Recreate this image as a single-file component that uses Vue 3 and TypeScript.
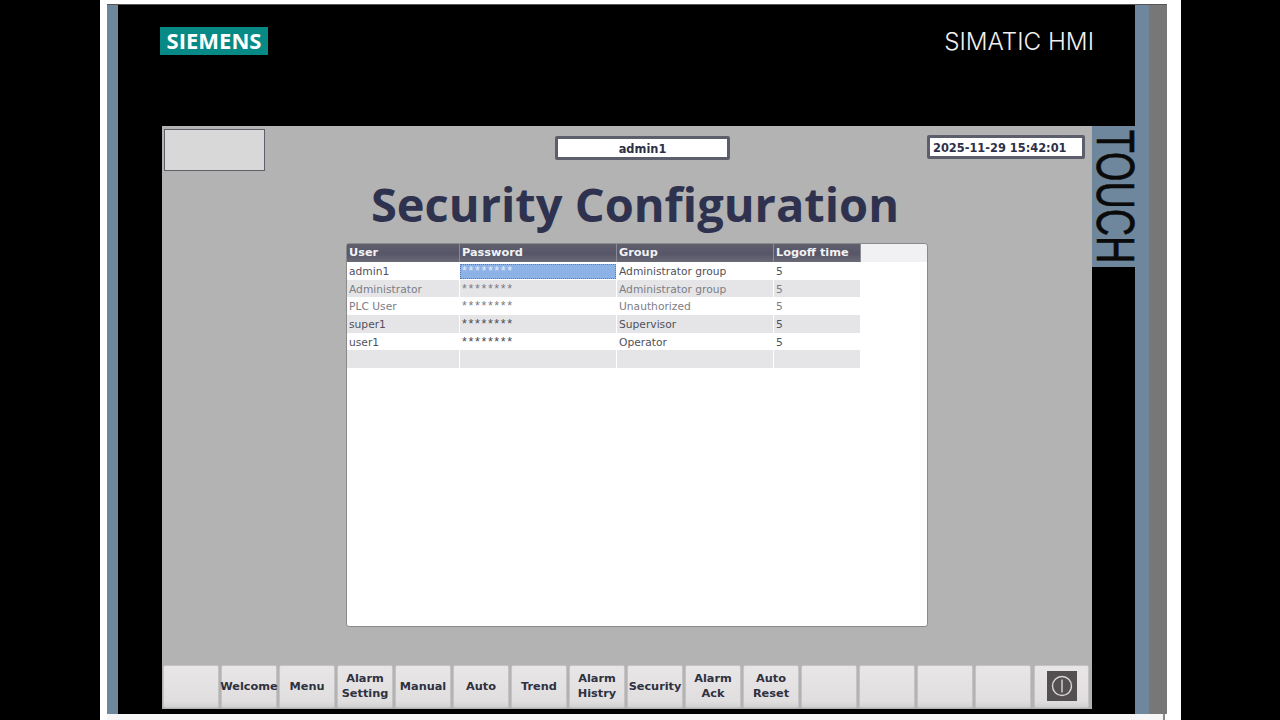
<template>
  <div class="screen">
    <div class="paper">
      <div class="hmi">
        <div class="stripe"></div>
        <div class="bezel">
          <header class="brand">
            <div class="logo">SIEMENS</div>
            <div class="simatic">SIMATIC HMI</div>
          </header>
          <div class="work">
            <main class="panel">
              <div class="top-row">
                <div class="blank-btn"></div>
                <div class="user-box">admin1</div>
                <div class="clock">2025-11-29 15:42:01</div>
              </div>
              <h1 class="title">Security Configuration</h1>
              <div class="view">
                <div class="grid head">
                  <div v-for="col in columns" :key="col" class="th">{{ col }}</div>
                </div>
                <div
                  v-for="(row, i) in rows"
                  :key="i"
                  class="grid row"
                  :class="{ odd: i % 2 === 1, dim: row.dim }"
                >
                  <div class="td">{{ row.user }}</div>
                  <div class="td pw" :class="{ selected: i === 0 }">{{ row.password }}</div>
                  <div class="td">{{ row.group }}</div>
                  <div class="td">{{ row.logoff }}</div>
                </div>
              </div>
              <nav class="keys">
                <button v-for="(label, i) in keys" :key="i" class="key">
                  <template v-for="(line, j) in label" :key="j">{{ line }}<br v-if="j < label.length - 1" /></template>
                </button>
                <button class="key">
                  <svg class="power" viewBox="0 0 30 30" width="30" height="30">
                    <rect width="30" height="30" fill="#544f50" />
                    <circle cx="15" cy="15" r="9.5" fill="none" stroke="#d8d6d6" stroke-width="1.4" />
                    <path d="M15 8.5V21.5" stroke="#d8d6d6" stroke-width="1.4" />
                  </svg>
                </button>
              </nav>
            </main>
            <aside class="touch-col">
              <div class="touch"><span>TOUCH</span></div>
            </aside>
          </div>
        </div>
        <div class="stripe right"></div>
        <div class="edge"></div>
      </div>
      <div class="paper-foot"></div>
    </div>
  </div>
</template>

<script setup lang="ts">
interface UserRow {
  user: string
  password: string
  group: string
  logoff: string
  dim?: boolean
}

const columns = ['User', 'Password', 'Group', 'Logoff time']

const rows: UserRow[] = [
  { user: 'admin1', password: '********', group: 'Administrator group', logoff: '5' },
  { user: 'Administrator', password: '********', group: 'Administrator group', logoff: '5', dim: true },
  { user: 'PLC User', password: '********', group: 'Unauthorized', logoff: '5', dim: true },
  { user: 'super1', password: '********', group: 'Supervisor', logoff: '5' },
  { user: 'user1', password: '********', group: 'Operator', logoff: '5' },
  { user: '', password: '', group: '', logoff: '' },
]

const keys: string[][] = [
  [],
  ['Welcome'],
  ['Menu'],
  ['Alarm', 'Setting'],
  ['Manual'],
  ['Auto'],
  ['Trend'],
  ['Alarm', 'Histry'],
  ['Security'],
  ['Alarm', 'Ack'],
  ['Auto', 'Reset'],
  [],
  [],
  [],
  [],
]
</script>

<style>
html,
body {
  margin: 0;
  background: #000;
}
</style>

<style scoped>
.screen {
  width: 1280px;
  height: 720px;
  background: #000;
  padding: 0 99px 0 100px;
  box-sizing: border-box;
  overflow: hidden;
}

.paper {
  height: 720px;
  background: #fff;
  padding: 4px 14px 0 7px;
  box-sizing: border-box;
  display: flex;
  flex-direction: column;
}

.hmi {
  height: 710px;
  flex: none;
  display: flex;
  border-top: 1px solid #555;
  box-sizing: border-box;
}

.paper-foot {
  flex: 1;
  margin-right: 2px;
  background: #f6f6f6;
  border-right: 2px solid #8a8a8a;
}

.stripe {
  width: 11px;
  background: #6f879c;
}

.stripe.right {
  width: 14px;
}

.edge {
  width: 18px;
  background: #777;
}

.bezel {
  flex: 1;
  background: #000;
  display: flex;
  flex-direction: column;
  min-width: 0;
}

.brand {
  height: 121px;
  flex: none;
  padding: 22px 41px 0 42px;
  box-sizing: border-box;
  display: flex;
  justify-content: space-between;
  align-items: flex-start;
}

.logo {
  width: 108px;
  height: 28px;
  background: #078a85;
  color: #fff;
  font: 700 22px/26px "Open Sans", sans-serif;
  text-align: center;
}

.simatic {
  color: #f0f0f0;
  font: 300 24.2px/30px Inter, sans-serif;
}

.work {
  flex: 1;
  display: flex;
  padding: 0 0 5px 44px;
  min-height: 0;
}

.panel {
  width: 930px;
  background: #b3b3b3;
  padding: 3px 2px 1px;
  box-sizing: border-box;
  display: flex;
  flex-direction: column;
  font-family: "DejaVu Sans", sans-serif;
}

.top-row {
  display: flex;
  align-items: flex-start;
  height: 44px;
  flex: none;
}

.blank-btn {
  width: 99px;
  height: 40px;
  background: #d8d8d8;
  border: 1px solid #5f6068;
}

.user-box {
  width: 169px;
  height: 18px;
  margin: 7px 0 0 290px;
  background: #fff;
  border: 3px solid #5c5e6b;
  border-radius: 2px;
  color: #2e3048;
  font-size: 11.4px;
  font-weight: 700;
  line-height: 20px;
  text-align: center;
}

.clock {
  width: 149px;
  height: 18px;
  margin: 6px 0 0 197px;
  padding-left: 3px;
  background: #fff;
  border: 3px solid #5c5e6b;
  border-radius: 2px;
  color: #2e3048;
  font-size: 11.4px;
  font-weight: 700;
  line-height: 20px;
  white-space: nowrap;
}

.title {
  margin: -2px 0 0 16px;
  height: 72px;
  flex: none;
  color: #2f324f;
  font: 700 47px/66px "Open Sans", sans-serif;
  text-align: center;
}

.view {
  width: 582px;
  height: 384px;
  flex: none;
  margin-left: 182px;
  background: #fff;
  border: 1px solid #8a8a8a;
  border-radius: 3px;
  box-sizing: border-box;
  background-image: linear-gradient(#f1f1f3, #f1f1f3);
  background-size: 100% 18px;
  background-repeat: no-repeat;
}

.grid {
  display: grid;
  grid-template-columns: 113px 157px 157px 87px;
  width: 514px;
}

.head {
  height: 18px;
}

.th {
  background: linear-gradient(#5f5f6e, #565668 55%, #6a6a76);
  color: #f2f2f4;
  font: 700 11.3px/18px "DejaVu Sans", sans-serif;
  padding-left: 2px;
  border-right: 1px solid #8b8b96;
  box-sizing: border-box;
}

.row {
  height: 17.67px;
}

.td {
  color: #51515c;
  font: 10.7px/17px "DejaVu Sans", sans-serif;
  padding: 1px 0 0 2px;
  border-right: 1px solid #fff;
  box-sizing: border-box;
  white-space: nowrap;
}

.row.odd {
  background: #e5e5e8;
}

.row.dim .td {
  color: #7d7d85;
}

.td.pw {
  color: #4c4c58;
  font: 12.4px/17px "Liberation Sans", sans-serif;
  letter-spacing: 1.65px;
}

.td.selected {
  position: relative;
  z-index: 0;
  color: #e3ecf8;
}

/* selection box sits a little inside the row */
.td.selected::before {
  content: "";
  position: absolute;
  inset: 2px 0 1px;
  z-index: -1;
  background: #8db2e6;
  border: 1px dotted #5c7cb0;
}

.keys {
  margin: auto 0 0 -1px;
  display: flex;
  gap: 2px;
}

.key {
  width: 56px;
  height: 43px;
  flex: none;
  padding: 0 0 1px;
  background: linear-gradient(#e8e6e6, #e0dedf 85%, #d4d3d3);
  border: 1px solid #c4c4c4;
  border-radius: 2px;
  color: #2f3140;
  font: 700 11.3px/15px "DejaVu Sans", sans-serif;
  display: flex;
  align-items: center;
  justify-content: center;
  text-align: center;
  white-space: nowrap;
}

.key:last-child {
  width: 55px;
  margin-left: 1px;
}

.power {
  display: block;
}

.touch-col {
  flex: 1;
  min-width: 0;
}

.touch {
  height: 141px;
  background: #6f879c;
  display: flex;
  align-items: center;
  justify-content: center;
}

.touch span {
  flex: none;
  writing-mode: vertical-rl;
  color: #0a0a0a;
  font: 400 54px/43px "Liberation Sans", sans-serif;
  -webkit-text-stroke: 0.6px #0a0a0a;
  white-space: nowrap;
  transform: translateX(2px) scaleY(0.7);
}
</style>
